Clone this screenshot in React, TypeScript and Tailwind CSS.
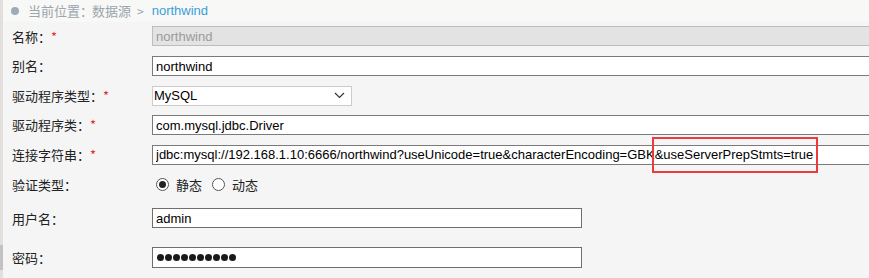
import { useState } from "react";

const cjk = "font-['Microsoft_YaHei','Noto_Sans_CJK_SC',sans-serif]";
const latin = "font-['Liberation_Sans',Arial,'Noto_Sans_CJK_SC',sans-serif]";

const Label = ({ text, required }: { text: string; required?: boolean }) => (
  <div className={`w-[149px] shrink-0 pl-[9px] text-[13px] text-[#222] ${cjk}`}>
    {text}：{required && <span className="text-[#e0302c]">*</span>}
  </div>
);

const App = () => {
  const [auth, setAuth] = useState("static");
  const url =
    "jdbc:mysql://192.168.1.10:6666/northwind?useUnicode=true&characterEncoding=GBK&useServerPrepStmts=true";

  return (
    <div className="flex w-[869px] h-[278px] overflow-hidden bg-[#f5f5f5]">
      {/* left strip */}
      <div className="w-[3px] shrink-0 flex flex-col bg-[#e2dfdc]">
        <div className="h-[245px]" />
        <div className="h-[25px] bg-[#c4c2c0]" />
      </div>

      <div className="flex-1 flex flex-col">
        {/* breadcrumb */}
        <div className={`h-[22px] flex items-center pl-[8px] bg-[#f8f8f6] text-[13px] ${cjk}`}>
          <span className="w-[8px] h-[8px] rounded-full bg-[#9eaab6]" />
          <span className="text-[#9aa5ae] ml-[9px]">当前位置：</span>
          <span className="text-[#9aa5ae] -ml-[1px]">数据源</span>
          <span className="text-[#9aa5ae] text-[12px] ml-[6px]">&gt;</span>
          <span className={`text-[#3b9fd6] ml-[8px] text-[13px] ${latin}`}>northwind</span>
        </div>

        {/* 名称 */}
        <div className="h-[30px] flex items-center">
          <Label text="名称" required />
          <input
            readOnly
            value="northwind"
            className={`h-[20px] w-[730px] px-[3px] border border-[#bdbdbd] bg-[#e3e3e3] text-[13px] text-[#9a9a9a] outline-none ${latin}`}
          />
        </div>

        {/* 别名 */}
        <div className="h-[30px] flex items-center">
          <Label text="别名" />
          <input
            readOnly
            value="northwind"
            className={`h-[20px] w-[730px] px-[3px] border border-[#7a7a7a] bg-white text-[13px] text-black outline-none ${latin}`}
          />
        </div>

        {/* 驱动程序类型 */}
        <div className="h-[30px] flex items-center">
          <Label text="驱动程序类型" required />
          <div className={`h-[20px] w-[200px] flex items-center justify-between pl-[1px] pr-[6px] border border-[#cccccc] bg-white text-[13px] text-black ${latin}`}>
            <span>MySQL</span>
            <svg width="11" height="7" viewBox="0 0 11 7" fill="none">
              <path d="M1 1l4.5 4.5L10 1" stroke="#333" strokeWidth="1.2" />
            </svg>
          </div>
        </div>

        {/* 驱动程序类 */}
        <div className="h-[30px] flex items-center">
          <Label text="驱动程序类" required />
          <input
            readOnly
            value="com.mysql.jdbc.Driver"
            className={`h-[20px] w-[730px] px-[3px] border border-[#7a7a7a] bg-white text-[13px] text-black outline-none ${latin}`}
          />
        </div>

        {/* 连接字符串 */}
        <div className="relative h-[30px] flex items-center">
          <Label text="连接字符串" required />
          <input
            readOnly
            value={url}
            className={`h-[20px] w-[730px] px-[3px] border border-[#7a7a7a] bg-white text-[13px] text-black outline-none ${latin}`}
          />
          <div className="absolute left-[649px] top-[-3px] w-[166px] h-[36px] border-2 border-[#ec3b3d]" />
        </div>

        {/* 验证类型 */}
        <div className="h-[30px] flex items-center">
          <Label text="验证类型" />
          <div className={`flex items-center text-[13px] text-[#222] ${cjk}`}>
            <label className="flex items-center ml-[4px] cursor-pointer" onClick={() => setAuth("static")}>
              <span className="w-[13px] h-[13px] rounded-full border border-[#555] bg-white flex items-center justify-center">
                {auth === "static" && <span className="w-[7px] h-[7px] rounded-full bg-[#222]" />}
              </span>
              <span className="ml-[7px]">静态</span>
            </label>
            <label className="flex items-center ml-[10px] cursor-pointer" onClick={() => setAuth("dynamic")}>
              <span className="w-[13px] h-[13px] rounded-full border border-[#555] bg-white flex items-center justify-center">
                {auth === "dynamic" && <span className="w-[7px] h-[7px] rounded-full bg-[#222]" />}
              </span>
              <span className="ml-[7px]">动态</span>
            </label>
          </div>
        </div>

        {/* 用户名 */}
        <div className="h-[39px] flex items-center">
          <Label text="用户名" />
          <input
            readOnly
            value="admin"
            className={`h-[20px] w-[430px] px-[3px] border border-[#6e6e6e] bg-white text-[13px] text-black outline-none ${latin}`}
          />
        </div>

        {/* 密码 */}
        <div className="h-[41px] flex items-center">
          <Label text="密码" />
          <div className="h-[21px] w-[430px] pl-[4px] flex items-center gap-[1px] border border-[#6e6e6e] bg-white">
            {Array.from({ length: 10 }).map((_, i) => (
              <span key={i} className="w-[7px] h-[7px] rounded-full bg-[#1a1a1a]" />
            ))}
          </div>
        </div>
      </div>
    </div>
  );
};

export default App;
